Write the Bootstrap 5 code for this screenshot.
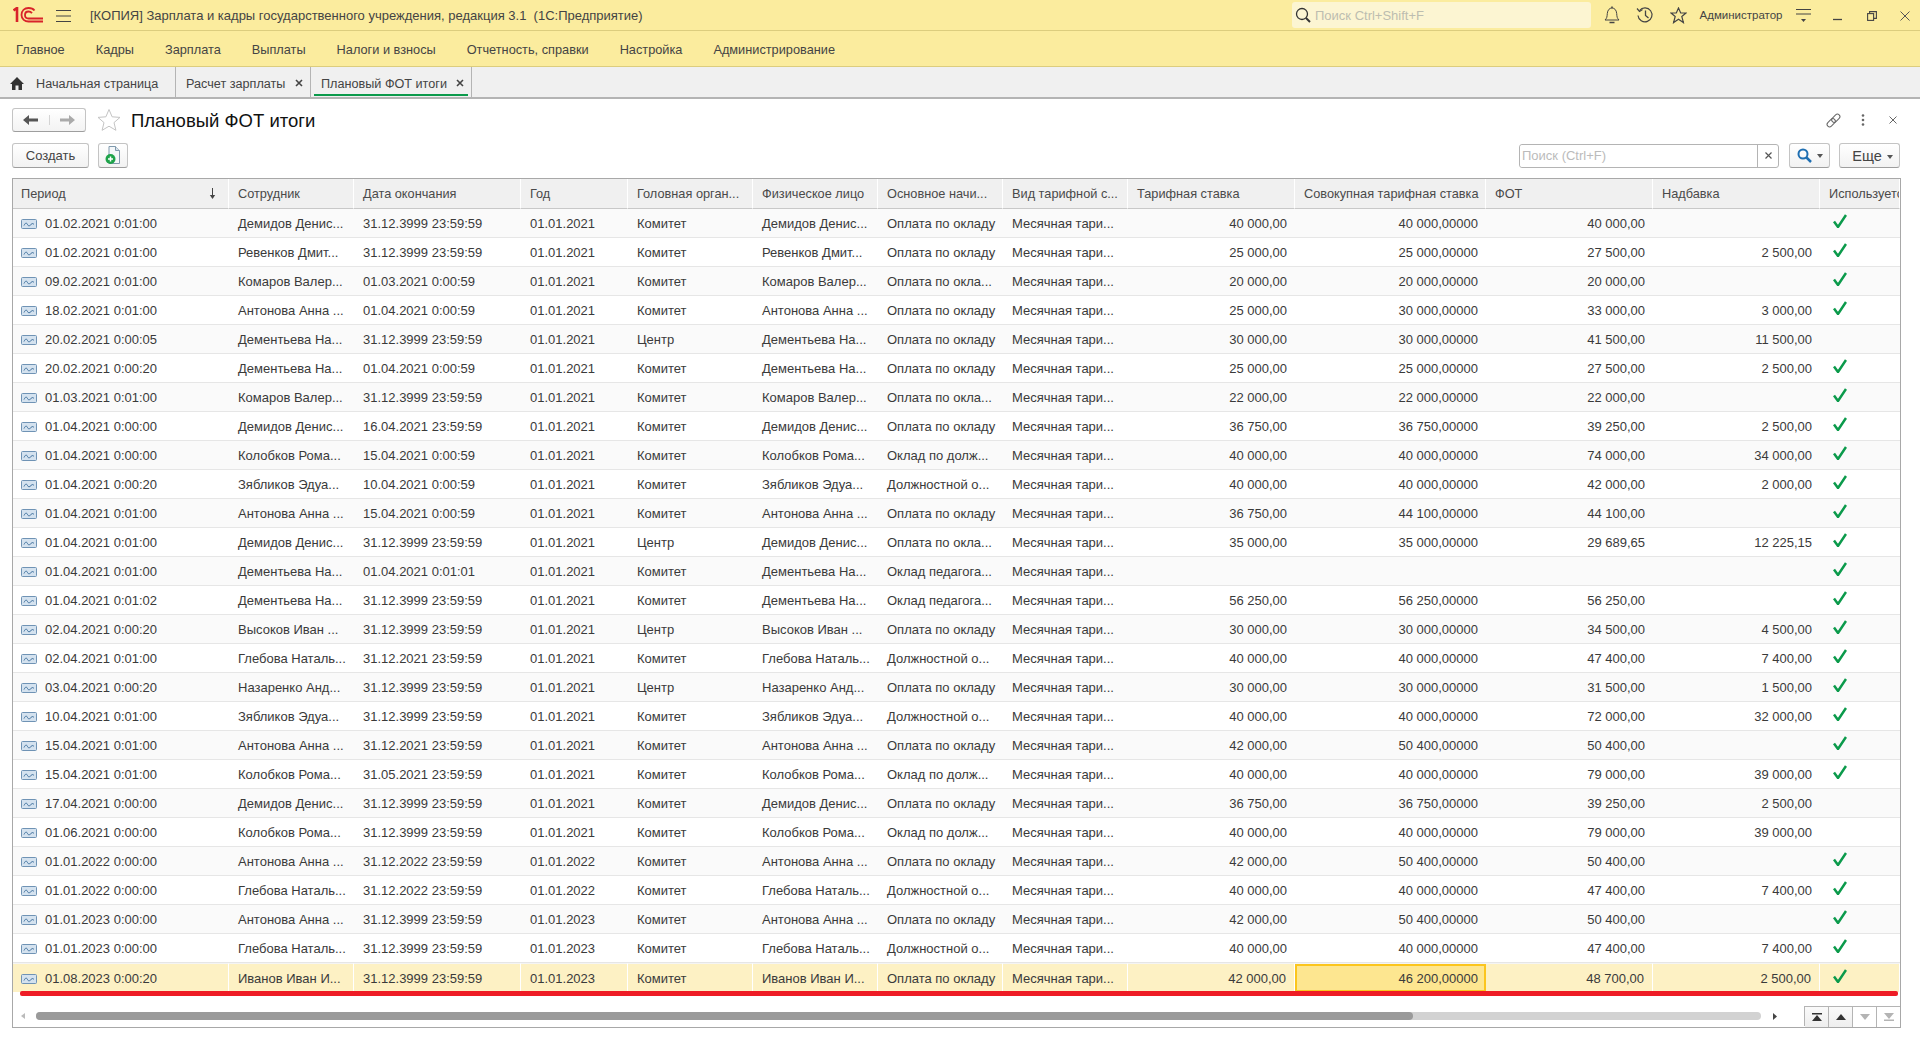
<!DOCTYPE html>
<html lang="ru">
<head>
<meta charset="utf-8">
<title>Плановый ФОТ итоги</title>
<link href="https://cdn.jsdelivr.net/npm/bootstrap@5.3.0/dist/css/bootstrap.min.css" rel="stylesheet">
<style>
html,body{height:100%;overflow:hidden}
body{font-family:"Liberation Sans",Arial,sans-serif;font-size:13px;color:#3a3a3a;background:#fff;line-height:16px}
.app-top{height:31px;background:#fbec9e;border-bottom:1px solid #dccd7e;overflow:hidden}
.app-top>*{flex-shrink:0}
.logo-box{width:56px;padding-left:13px}
.burger-box{width:34px}
.app-name{width:1202px;color:#444;white-space:pre;padding-top:1px}
.global-search{width:299px;height:26px;background:#fcf5d2;border-radius:3px;padding-left:3px;color:#bdbdb0}
.global-search svg{margin-right:4px}
.global-search span{padding-top:1px}
.top-icons{margin-left:4px}
.top-icons>*{flex-shrink:0}
.top-ico{width:33.5px;text-align:center}
.top-user{font-size:11.5px;width:91px;color:#444;white-space:nowrap}
.win-ico{width:34px;text-align:center}
.win-last{width:31px;text-align:left;padding-left:11px}
.app-menu{height:36px;background:#fbec9e;border-bottom:1px solid #dccd7e;padding-left:16px;gap:31px}
.app-menu .nav-link{padding:2px 0 0;color:#444;font-size:12.75px}
.app-tabs{height:32px;background:#f0f0f0;border-bottom:2px solid #b4b4b4}
.tab-item{height:30px;border-right:1px solid #b4b4b4;color:#444;position:relative;padding:3px 0 0 10px;font-size:12.65px}
.tab-home{width:176px}
.tab-calc{width:135px}
.tab-plan{width:161px}
.tab-line{position:absolute;left:3px;right:3px;bottom:1px;height:2px;background:#0b9a4b}
.tab-x{position:absolute;right:7px;top:12px;line-height:0}
.tab-label{margin-left:12px}
.form-head{padding:9px 12px 0 12px;height:33px}
.nav-pair{width:74px;height:24px;border:1px solid #c4c4c4;border-bottom-color:#9e9e9e;border-radius:3px;background:linear-gradient(#fff,#f3f3f3)}
.nav-half{flex:1;text-align:center;line-height:0}
.nav-half+.nav-half{border-left:1px solid #d4d4d4}
.star-wrap{margin:0 10px 0 11px;line-height:0}
.form-title{font-size:18.5px;line-height:24px;color:#111;padding-top:1px}
.tool-gap{width:30px;text-align:center;line-height:0}
.cmd-bar{margin-top:11px;padding:0 20px 0 12px;height:25px}
.btn.ui-btn{font-size:13px;line-height:16px;color:#444;height:25px;padding:0;border:1px solid #c4c4c4;border-bottom-color:#9e9e9e;border-radius:3px;background:linear-gradient(#fff,#f2f2f2)}
.btn-create{width:77px;margin-right:9px}
.btn-add{width:30px}
.find-box{width:260px;height:24px;border:1px solid #b4b4b4;border-radius:3px;margin-right:10px}
.find-box .form-control{font-size:13px;line-height:16px;border:0;height:22px;padding:0 2px;border-radius:3px 0 0 3px;flex:1;color:#444;box-shadow:none}
.find-box .form-control::placeholder{color:#bbb}
.find-clear{width:21px;border-left:1px solid #b4b4b4;line-height:0}
.btn-find{width:41px;margin-right:9px}
.btn.ui-btn.btn-more{width:61px;font-size:14.5px;padding-left:6px}
.caret-dn{display:inline-block;width:0;height:0;border:3px solid transparent;border-top:4px solid #555;border-bottom:0;margin-left:5px;vertical-align:2px}
.grid-frame{position:relative;margin:10px 0 0 12px;width:1889px;height:850px;border:1px solid #a8a8a8;overflow:hidden}
.grid-table{table-layout:fixed;width:1887px;border-collapse:separate;border-spacing:0;margin:0}
.grid-table col:nth-child(1){width:216px}
.grid-table col:nth-child(2),.grid-table col:nth-child(5),.grid-table col:nth-child(6),.grid-table col:nth-child(7),.grid-table col:nth-child(8){width:125px}
.grid-table col:nth-child(3),.grid-table col:nth-child(9),.grid-table col:nth-child(11),.grid-table col:nth-child(12){width:167px}
.grid-table col:nth-child(4){width:107px}
.grid-table col:nth-child(10){width:191px}
.grid-table col:nth-child(13){width:80px}
.grid-table>thead>tr>th{height:30px;padding:0 8px;background:#f0f0f0;font-weight:400;font-size:12.75px;color:#4a4a4a;border-bottom:1px solid #c8c8c8;border-right:1px solid #fff;white-space:nowrap;overflow:hidden;position:relative;vertical-align:middle;box-shadow:none}
.grid-table>tbody>tr>td{height:29px;padding:1px 8px 0 9px;background:#fff;color:#3a3a3a;border-bottom:1px solid #e6e6e6;white-space:nowrap;overflow:hidden;vertical-align:middle;box-shadow:none;line-height:16px}
.grid-table>tbody>tr:nth-child(odd)>td{background:#fafafa}
.grid-table>tbody>tr>td.cell-num{text-align:right}
.grid-table>tbody>tr>td.cell-first{padding-left:8px}
.grid-table>tbody>tr>td.cell-chk{padding:0 0 4px 13px;line-height:0}
.grid-table>thead>tr>th+th{padding-left:9px}
.doc-ico{margin-right:8px;vertical-align:-1px}
.sort-ico{position:absolute;right:12px;top:9px}
.grid-table>tbody>tr.row-sel>td{background:#fdf1c4;border-bottom:0;border-right:1px solid #fff;border-top:1px solid #f4f4f4}
.grid-table>tbody>tr.row-sel>td.cell-cur{background:#fde690;box-shadow:inset 0 0 0 2px #fbc51d;border-right:0}
.mark-line{position:absolute;left:7px;top:812px;width:1878px;height:5px;background:#ee1c25;border-radius:2px}
.grid-foot{height:34px;padding-left:8px}
.scroll-arrow{width:15px;line-height:0;margin-top:21px}
.scroll-track{width:1725px;height:8px;background:#d2d2d2;border-radius:4px;margin-top:20px}
.scroll-thumb{height:8px;background:#9a9a9a;border-radius:4px}
.scroll-end{padding-left:12px;margin-top:21px;line-height:0}
.pager{margin-top:14px;width:96px;height:20px;border-left:1px solid #b4b4b4;border-top:1px solid #b4b4b4}
.pager-btn{flex:1;height:20px;line-height:0;border-right:1px solid #b4b4b4;background:linear-gradient(#fafafa,#eeeeee)}
.pager-btn:last-child{border-right:0}
.pager-btn.pager-off{background:#fff}
</style>
</head>
<body>
<svg width="0" height="0" class="position-absolute">
<defs>
<symbol id="doc" viewBox="0 0 16 10"><rect x=".5" y=".5" width="15" height="9" rx="1" fill="#d4e2ef" stroke="#6f93b5"/><path d="M3 6.500c1.500-3 2.500-3 3.500-1s2 1.500 3.500 0 2-1 3 0" fill="none" stroke="#3c6e9c"/></symbol>
<symbol id="chk" viewBox="0 0 14 14"><path d="M1 7.500 5 13 13 1" fill="none" stroke="#0b9a4b" stroke-width="2.500"/></symbol>
</defs>
</svg>

<div class="app-top d-flex align-items-center">
  <div class="logo-box d-flex align-items-center">
    <svg width="30" height="16" viewBox="0 0 30 16" fill="none" stroke="#d8232a">
      <path d="M.5 3.500 4 1v14" stroke-width="2.600"/>
      <path d="M21.500 3.500C20 1.500 17.500 1 15.500 1 11.500 1 8.500 3.800 8.500 8s3.500 6.500 7 6.500H30" stroke-width="1.800"/>
      <path d="M19 6.200C18 5 17 4.500 15.500 4.500 13.500 4.500 12 6 12 8c0 2.300 1.800 3.500 3.500 3.500H30" stroke-width="1.800"/>
    </svg>
  </div>
  <div class="burger-box">
    <svg width="15" height="12" viewBox="0 0 15 12" stroke="#444"><path d="M0 .5h15M0 6h15M0 11.500h15"/></svg>
  </div>
  <div class="app-name">[КОПИЯ] Зарплата и кадры государственного учреждения, редакция 3.1  (1С:Предприятие)</div>
  <div class="global-search d-flex align-items-center">
    <svg width="16" height="16" viewBox="0 0 16 16" fill="none" stroke="#333" stroke-width="1.300"><circle cx="7" cy="7" r="5.500"/><path d="m11 11 4 4" stroke-width="2"/></svg>
    <span>Поиск Ctrl+Shift+F</span>
  </div>
  <div class="top-icons d-flex align-items-center">
    <div class="top-ico"><svg width="16" height="18" viewBox="0 0 16 18" fill="none" stroke="#444"><path d="M1 14c2-2 2-3 2.300-6.500C3.600 4 5.500 2 8 2s4.400 2 4.700 5.500C13 11 13 12 15 14z"/><path d="M8 .5V2M5.500 16.500h5" stroke-width="1.500"/></svg></div>
    <div class="top-ico"><svg width="18" height="18" viewBox="0 0 18 18" fill="none" stroke="#444"><path d="M3.500 4.500A7 7 0 1 1 2 9.500" stroke-width="1.200"/><path d="M1 2.500 3.500 5.500 6.500 3.500" stroke-width="1.200"/><path d="M9.500 4.500v5l3 2.500" stroke-width="1.300"/></svg></div>
    <div class="top-ico"><svg width="17" height="17" viewBox="0 0 17 17" fill="none" stroke="#444" stroke-width="1.200"><path d="m8.500 1 2.200 5h5.300l-4.200 3.500 1.600 6-4.900-3.300-4.900 3.300 1.600-6L1 6h5.300z"/></svg></div>
    <div class="top-user ps-1">Администратор</div>
    <div class="win-ico"><svg width="15" height="15" viewBox="0 0 15 15" stroke="#444"><path d="M0 1.500h15M0 6h15"/><path d="M5 11h5l-2.500 3z" fill="#444" stroke="none"/></svg></div>
    <div class="win-ico"><svg width="9" height="12" viewBox="0 0 9 12" stroke="#444" stroke-width="1.300"><path d="M0 9.500h9"/></svg></div>
    <div class="win-ico"><svg width="10" height="10" viewBox="0 0 10 10" fill="none" stroke="#444" stroke-width="1.100"><rect x=".6" y="2.600" width="6" height="6.800"/><path d="M2.600 2.500V.6h6.800v6.800H6.600"/></svg></div>
    <div class="win-ico win-last"><svg width="10" height="10" viewBox="0 0 10 10" stroke="#555"><path d="m.5.500 9 9m0-9-9 9"/></svg></div>
  </div>
</div>

<nav class="app-menu nav d-flex align-items-center flex-nowrap">
  <a class="nav-link" href="#">Главное</a>
  <a class="nav-link" href="#">Кадры</a>
  <a class="nav-link" href="#">Зарплата</a>
  <a class="nav-link" href="#">Выплаты</a>
  <a class="nav-link" href="#">Налоги и взносы</a>
  <a class="nav-link" href="#">Отчетность, справки</a>
  <a class="nav-link" href="#">Настройка</a>
  <a class="nav-link" href="#">Администрирование</a>
</nav>

<div class="app-tabs d-flex">
  <div class="tab-item tab-home d-flex align-items-center">
    <svg width="14" height="13" viewBox="0 0 14 13" fill="#333"><path d="M7 0 0 7h2v6h3.500V8.500h3V13H12V7h2z"/></svg>
    <span class="tab-label">Начальная страница</span>
  </div>
  <div class="tab-item tab-calc d-flex align-items-center">
    <span>Расчет зарплаты</span>
    <span class="tab-x"><svg width="8" height="8" viewBox="0 0 8 8" stroke="#444" stroke-width="1.600"><path d="m1 1 6 6m0-6-6 6"/></svg></span>
  </div>
  <div class="tab-item tab-plan d-flex align-items-center">
    <span>Плановый ФОТ итоги</span>
    <span class="tab-x"><svg width="8" height="8" viewBox="0 0 8 8" stroke="#444" stroke-width="1.600"><path d="m1 1 6 6m0-6-6 6"/></svg></span>
    <span class="tab-line"></span>
  </div>
</div>

<div class="form-head d-flex align-items-center">
  <div class="nav-pair d-flex align-items-center">
    <div class="nav-half"><svg width="15" height="10" viewBox="0 0 15 10" fill="#555"><path d="M0 5 6 0v3.500h9v3H6V10z"/></svg></div>
    <div class="nav-half"><svg width="15" height="10" viewBox="0 0 15 10" fill="#aaa"><path d="M15 5 9 0v3.500H0v3h9V10z"/></svg></div>
  </div>
  <div class="star-wrap"><svg width="24" height="24" viewBox="0 0 24 24" fill="none" stroke="#c4c4c4"><path d="m12 1.500 3.100 7.300 7.900.6-6 5.200 1.900 7.700L12 18.200l-6.900 4.100L7 14.600 1 9.400l7.900-.6z"/></svg></div>
  <div class="form-title">Плановый ФОТ итоги</div>
  <div class="d-flex align-items-center ms-auto">
    <div class="tool-gap"><svg width="17" height="17" viewBox="0 0 17 17" fill="none" stroke="#666"><g transform="rotate(-45 8.500 8.500)"><rect x=".5" y="6" width="9.500" height="5" rx="2.500"/><rect x="7" y="6" width="9.500" height="5" rx="2.500"/></g></svg></div>
    <div class="tool-gap"><svg width="4" height="12" viewBox="0 0 4 12" fill="#666"><circle cx="2" cy="1.500" r="1.300"/><circle cx="2" cy="6" r="1.300"/><circle cx="2" cy="10.500" r="1.300"/></svg></div>
    <div class="tool-gap"><svg width="8" height="8" viewBox="0 0 8 8" stroke="#666"><path d="m.5.500 7 7m0-7-7 7"/></svg></div>
  </div>
</div>

<div class="cmd-bar d-flex align-items-center">
  <button type="button" class="btn ui-btn btn-create">Создать</button>
  <button type="button" class="btn ui-btn btn-add d-flex align-items-center justify-content-center">
    <svg width="16" height="19" viewBox="0 0 16 19"><path d="M4 .5h6.500l4 4v13H4z" fill="#f4f7f9" stroke="#7f99ad"/><path d="M10.500.5v4h4" fill="#d8e2ea" stroke="#7f99ad"/><circle cx="5.500" cy="13" r="5" fill="#1ea34a"/><path d="M5.500 10.500v5M3 13h5" stroke="#fff" stroke-width="1.500"/></svg>
  </button>
  <div class="find-box d-flex align-items-center ms-auto">
    <input class="form-control" type="text" placeholder="Поиск (Ctrl+F)" aria-label="Поиск">
    <div class="find-clear d-flex h-100 align-items-center justify-content-center"><svg width="7" height="7" viewBox="0 0 7 7" stroke="#555" stroke-width="1.200"><path d="m.5.500 6 6m0-6-6 6"/></svg></div>
  </div>
  <button type="button" class="btn ui-btn btn-find d-flex align-items-center justify-content-center">
    <svg width="15" height="15" viewBox="0 0 15 15" fill="none" stroke="#1f6fb2" stroke-width="2"><circle cx="6" cy="6" r="4.500"/><path d="m9.500 9.500 4.500 4.500" stroke-width="2.500"/></svg><span class="caret-dn"></span>
  </button>
  <button type="button" class="btn ui-btn btn-more">Еще<span class="caret-dn"></span></button>
</div>

<div class="grid-frame">
<table class="table grid-table">
<colgroup><col><col><col><col><col><col><col><col><col><col><col><col><col></colgroup>
<thead><tr><th>Период<svg class="sort-ico" width="7" height="11" viewBox="0 0 7 11"><path d="M3.500 0v8" stroke="#444"/><path d="M.8 7h5.400L3.500 11z" fill="#444"/></svg></th><th>Сотрудник</th><th>Дата окончания</th><th>Год</th><th>Головная орган...</th><th>Физическое лицо</th><th>Основное начи...</th><th>Вид тарифной с...</th><th>Тарифная ставка</th><th>Совокупная тарифная ставка</th><th>ФОТ</th><th>Надбавка</th><th>Используется</th></tr></thead>
<tbody>
<tr><td class="cell-first"><svg class="doc-ico" width="16" height="10"><use href="#doc"/></svg>01.02.2021 0:01:00</td><td>Демидов Денис...</td><td>31.12.3999 23:59:59</td><td>01.01.2021</td><td>Комитет</td><td>Демидов Денис...</td><td>Оплата по окладу</td><td>Месячная тари...</td><td class="cell-num">40 000,00</td><td class="cell-num">40 000,00000</td><td class="cell-num">40 000,00</td><td class="cell-num"></td><td class="cell-chk"><svg width="14" height="14"><use href="#chk"/></svg></td></tr>
<tr><td class="cell-first"><svg class="doc-ico" width="16" height="10"><use href="#doc"/></svg>01.02.2021 0:01:00</td><td>Ревенков Дмит...</td><td>31.12.3999 23:59:59</td><td>01.01.2021</td><td>Комитет</td><td>Ревенков Дмит...</td><td>Оплата по окладу</td><td>Месячная тари...</td><td class="cell-num">25 000,00</td><td class="cell-num">25 000,00000</td><td class="cell-num">27 500,00</td><td class="cell-num">2 500,00</td><td class="cell-chk"><svg width="14" height="14"><use href="#chk"/></svg></td></tr>
<tr><td class="cell-first"><svg class="doc-ico" width="16" height="10"><use href="#doc"/></svg>09.02.2021 0:01:00</td><td>Комаров Валер...</td><td>01.03.2021 0:00:59</td><td>01.01.2021</td><td>Комитет</td><td>Комаров Валер...</td><td>Оплата по окла...</td><td>Месячная тари...</td><td class="cell-num">20 000,00</td><td class="cell-num">20 000,00000</td><td class="cell-num">20 000,00</td><td class="cell-num"></td><td class="cell-chk"><svg width="14" height="14"><use href="#chk"/></svg></td></tr>
<tr><td class="cell-first"><svg class="doc-ico" width="16" height="10"><use href="#doc"/></svg>18.02.2021 0:01:00</td><td>Антонова Анна ...</td><td>01.04.2021 0:00:59</td><td>01.01.2021</td><td>Комитет</td><td>Антонова Анна ...</td><td>Оплата по окладу</td><td>Месячная тари...</td><td class="cell-num">25 000,00</td><td class="cell-num">30 000,00000</td><td class="cell-num">33 000,00</td><td class="cell-num">3 000,00</td><td class="cell-chk"><svg width="14" height="14"><use href="#chk"/></svg></td></tr>
<tr><td class="cell-first"><svg class="doc-ico" width="16" height="10"><use href="#doc"/></svg>20.02.2021 0:00:05</td><td>Дементьева На...</td><td>31.12.3999 23:59:59</td><td>01.01.2021</td><td>Центр</td><td>Дементьева На...</td><td>Оплата по окладу</td><td>Месячная тари...</td><td class="cell-num">30 000,00</td><td class="cell-num">30 000,00000</td><td class="cell-num">41 500,00</td><td class="cell-num">11 500,00</td><td class="cell-chk"></td></tr>
<tr><td class="cell-first"><svg class="doc-ico" width="16" height="10"><use href="#doc"/></svg>20.02.2021 0:00:20</td><td>Дементьева На...</td><td>01.04.2021 0:00:59</td><td>01.01.2021</td><td>Комитет</td><td>Дементьева На...</td><td>Оплата по окладу</td><td>Месячная тари...</td><td class="cell-num">25 000,00</td><td class="cell-num">25 000,00000</td><td class="cell-num">27 500,00</td><td class="cell-num">2 500,00</td><td class="cell-chk"><svg width="14" height="14"><use href="#chk"/></svg></td></tr>
<tr><td class="cell-first"><svg class="doc-ico" width="16" height="10"><use href="#doc"/></svg>01.03.2021 0:01:00</td><td>Комаров Валер...</td><td>31.12.3999 23:59:59</td><td>01.01.2021</td><td>Комитет</td><td>Комаров Валер...</td><td>Оплата по окла...</td><td>Месячная тари...</td><td class="cell-num">22 000,00</td><td class="cell-num">22 000,00000</td><td class="cell-num">22 000,00</td><td class="cell-num"></td><td class="cell-chk"><svg width="14" height="14"><use href="#chk"/></svg></td></tr>
<tr><td class="cell-first"><svg class="doc-ico" width="16" height="10"><use href="#doc"/></svg>01.04.2021 0:00:00</td><td>Демидов Денис...</td><td>16.04.2021 23:59:59</td><td>01.01.2021</td><td>Комитет</td><td>Демидов Денис...</td><td>Оплата по окладу</td><td>Месячная тари...</td><td class="cell-num">36 750,00</td><td class="cell-num">36 750,00000</td><td class="cell-num">39 250,00</td><td class="cell-num">2 500,00</td><td class="cell-chk"><svg width="14" height="14"><use href="#chk"/></svg></td></tr>
<tr><td class="cell-first"><svg class="doc-ico" width="16" height="10"><use href="#doc"/></svg>01.04.2021 0:00:00</td><td>Колобков Рома...</td><td>15.04.2021 0:00:59</td><td>01.01.2021</td><td>Комитет</td><td>Колобков Рома...</td><td>Оклад по долж...</td><td>Месячная тари...</td><td class="cell-num">40 000,00</td><td class="cell-num">40 000,00000</td><td class="cell-num">74 000,00</td><td class="cell-num">34 000,00</td><td class="cell-chk"><svg width="14" height="14"><use href="#chk"/></svg></td></tr>
<tr><td class="cell-first"><svg class="doc-ico" width="16" height="10"><use href="#doc"/></svg>01.04.2021 0:00:20</td><td>Зябликов Эдуа...</td><td>10.04.2021 0:00:59</td><td>01.01.2021</td><td>Комитет</td><td>Зябликов Эдуа...</td><td>Должностной о...</td><td>Месячная тари...</td><td class="cell-num">40 000,00</td><td class="cell-num">40 000,00000</td><td class="cell-num">42 000,00</td><td class="cell-num">2 000,00</td><td class="cell-chk"><svg width="14" height="14"><use href="#chk"/></svg></td></tr>
<tr><td class="cell-first"><svg class="doc-ico" width="16" height="10"><use href="#doc"/></svg>01.04.2021 0:01:00</td><td>Антонова Анна ...</td><td>15.04.2021 0:00:59</td><td>01.01.2021</td><td>Комитет</td><td>Антонова Анна ...</td><td>Оплата по окладу</td><td>Месячная тари...</td><td class="cell-num">36 750,00</td><td class="cell-num">44 100,00000</td><td class="cell-num">44 100,00</td><td class="cell-num"></td><td class="cell-chk"><svg width="14" height="14"><use href="#chk"/></svg></td></tr>
<tr><td class="cell-first"><svg class="doc-ico" width="16" height="10"><use href="#doc"/></svg>01.04.2021 0:01:00</td><td>Демидов Денис...</td><td>31.12.3999 23:59:59</td><td>01.01.2021</td><td>Центр</td><td>Демидов Денис...</td><td>Оплата по окла...</td><td>Месячная тари...</td><td class="cell-num">35 000,00</td><td class="cell-num">35 000,00000</td><td class="cell-num">29 689,65</td><td class="cell-num">12 225,15</td><td class="cell-chk"><svg width="14" height="14"><use href="#chk"/></svg></td></tr>
<tr><td class="cell-first"><svg class="doc-ico" width="16" height="10"><use href="#doc"/></svg>01.04.2021 0:01:00</td><td>Дементьева На...</td><td>01.04.2021 0:01:01</td><td>01.01.2021</td><td>Комитет</td><td>Дементьева На...</td><td>Оклад педагога...</td><td>Месячная тари...</td><td class="cell-num"></td><td class="cell-num"></td><td class="cell-num"></td><td class="cell-num"></td><td class="cell-chk"><svg width="14" height="14"><use href="#chk"/></svg></td></tr>
<tr><td class="cell-first"><svg class="doc-ico" width="16" height="10"><use href="#doc"/></svg>01.04.2021 0:01:02</td><td>Дементьева На...</td><td>31.12.3999 23:59:59</td><td>01.01.2021</td><td>Комитет</td><td>Дементьева На...</td><td>Оклад педагога...</td><td>Месячная тари...</td><td class="cell-num">56 250,00</td><td class="cell-num">56 250,00000</td><td class="cell-num">56 250,00</td><td class="cell-num"></td><td class="cell-chk"><svg width="14" height="14"><use href="#chk"/></svg></td></tr>
<tr><td class="cell-first"><svg class="doc-ico" width="16" height="10"><use href="#doc"/></svg>02.04.2021 0:00:20</td><td>Высоков Иван ...</td><td>31.12.3999 23:59:59</td><td>01.01.2021</td><td>Центр</td><td>Высоков Иван ...</td><td>Оплата по окладу</td><td>Месячная тари...</td><td class="cell-num">30 000,00</td><td class="cell-num">30 000,00000</td><td class="cell-num">34 500,00</td><td class="cell-num">4 500,00</td><td class="cell-chk"><svg width="14" height="14"><use href="#chk"/></svg></td></tr>
<tr><td class="cell-first"><svg class="doc-ico" width="16" height="10"><use href="#doc"/></svg>02.04.2021 0:01:00</td><td>Глебова Наталь...</td><td>31.12.2021 23:59:59</td><td>01.01.2021</td><td>Комитет</td><td>Глебова Наталь...</td><td>Должностной о...</td><td>Месячная тари...</td><td class="cell-num">40 000,00</td><td class="cell-num">40 000,00000</td><td class="cell-num">47 400,00</td><td class="cell-num">7 400,00</td><td class="cell-chk"><svg width="14" height="14"><use href="#chk"/></svg></td></tr>
<tr><td class="cell-first"><svg class="doc-ico" width="16" height="10"><use href="#doc"/></svg>03.04.2021 0:00:20</td><td>Назаренко Анд...</td><td>31.12.3999 23:59:59</td><td>01.01.2021</td><td>Центр</td><td>Назаренко Анд...</td><td>Оплата по окладу</td><td>Месячная тари...</td><td class="cell-num">30 000,00</td><td class="cell-num">30 000,00000</td><td class="cell-num">31 500,00</td><td class="cell-num">1 500,00</td><td class="cell-chk"><svg width="14" height="14"><use href="#chk"/></svg></td></tr>
<tr><td class="cell-first"><svg class="doc-ico" width="16" height="10"><use href="#doc"/></svg>10.04.2021 0:01:00</td><td>Зябликов Эдуа...</td><td>31.12.3999 23:59:59</td><td>01.01.2021</td><td>Комитет</td><td>Зябликов Эдуа...</td><td>Должностной о...</td><td>Месячная тари...</td><td class="cell-num">40 000,00</td><td class="cell-num">40 000,00000</td><td class="cell-num">72 000,00</td><td class="cell-num">32 000,00</td><td class="cell-chk"><svg width="14" height="14"><use href="#chk"/></svg></td></tr>
<tr><td class="cell-first"><svg class="doc-ico" width="16" height="10"><use href="#doc"/></svg>15.04.2021 0:01:00</td><td>Антонова Анна ...</td><td>31.12.2021 23:59:59</td><td>01.01.2021</td><td>Комитет</td><td>Антонова Анна ...</td><td>Оплата по окладу</td><td>Месячная тари...</td><td class="cell-num">42 000,00</td><td class="cell-num">50 400,00000</td><td class="cell-num">50 400,00</td><td class="cell-num"></td><td class="cell-chk"><svg width="14" height="14"><use href="#chk"/></svg></td></tr>
<tr><td class="cell-first"><svg class="doc-ico" width="16" height="10"><use href="#doc"/></svg>15.04.2021 0:01:00</td><td>Колобков Рома...</td><td>31.05.2021 23:59:59</td><td>01.01.2021</td><td>Комитет</td><td>Колобков Рома...</td><td>Оклад по долж...</td><td>Месячная тари...</td><td class="cell-num">40 000,00</td><td class="cell-num">40 000,00000</td><td class="cell-num">79 000,00</td><td class="cell-num">39 000,00</td><td class="cell-chk"><svg width="14" height="14"><use href="#chk"/></svg></td></tr>
<tr><td class="cell-first"><svg class="doc-ico" width="16" height="10"><use href="#doc"/></svg>17.04.2021 0:00:00</td><td>Демидов Денис...</td><td>31.12.3999 23:59:59</td><td>01.01.2021</td><td>Комитет</td><td>Демидов Денис...</td><td>Оплата по окладу</td><td>Месячная тари...</td><td class="cell-num">36 750,00</td><td class="cell-num">36 750,00000</td><td class="cell-num">39 250,00</td><td class="cell-num">2 500,00</td><td class="cell-chk"></td></tr>
<tr><td class="cell-first"><svg class="doc-ico" width="16" height="10"><use href="#doc"/></svg>01.06.2021 0:00:00</td><td>Колобков Рома...</td><td>31.12.3999 23:59:59</td><td>01.01.2021</td><td>Комитет</td><td>Колобков Рома...</td><td>Оклад по долж...</td><td>Месячная тари...</td><td class="cell-num">40 000,00</td><td class="cell-num">40 000,00000</td><td class="cell-num">79 000,00</td><td class="cell-num">39 000,00</td><td class="cell-chk"></td></tr>
<tr><td class="cell-first"><svg class="doc-ico" width="16" height="10"><use href="#doc"/></svg>01.01.2022 0:00:00</td><td>Антонова Анна ...</td><td>31.12.2022 23:59:59</td><td>01.01.2022</td><td>Комитет</td><td>Антонова Анна ...</td><td>Оплата по окладу</td><td>Месячная тари...</td><td class="cell-num">42 000,00</td><td class="cell-num">50 400,00000</td><td class="cell-num">50 400,00</td><td class="cell-num"></td><td class="cell-chk"><svg width="14" height="14"><use href="#chk"/></svg></td></tr>
<tr><td class="cell-first"><svg class="doc-ico" width="16" height="10"><use href="#doc"/></svg>01.01.2022 0:00:00</td><td>Глебова Наталь...</td><td>31.12.2022 23:59:59</td><td>01.01.2022</td><td>Комитет</td><td>Глебова Наталь...</td><td>Должностной о...</td><td>Месячная тари...</td><td class="cell-num">40 000,00</td><td class="cell-num">40 000,00000</td><td class="cell-num">47 400,00</td><td class="cell-num">7 400,00</td><td class="cell-chk"><svg width="14" height="14"><use href="#chk"/></svg></td></tr>
<tr><td class="cell-first"><svg class="doc-ico" width="16" height="10"><use href="#doc"/></svg>01.01.2023 0:00:00</td><td>Антонова Анна ...</td><td>31.12.3999 23:59:59</td><td>01.01.2023</td><td>Комитет</td><td>Антонова Анна ...</td><td>Оплата по окладу</td><td>Месячная тари...</td><td class="cell-num">42 000,00</td><td class="cell-num">50 400,00000</td><td class="cell-num">50 400,00</td><td class="cell-num"></td><td class="cell-chk"><svg width="14" height="14"><use href="#chk"/></svg></td></tr>
<tr><td class="cell-first"><svg class="doc-ico" width="16" height="10"><use href="#doc"/></svg>01.01.2023 0:00:00</td><td>Глебова Наталь...</td><td>31.12.3999 23:59:59</td><td>01.01.2023</td><td>Комитет</td><td>Глебова Наталь...</td><td>Должностной о...</td><td>Месячная тари...</td><td class="cell-num">40 000,00</td><td class="cell-num">40 000,00000</td><td class="cell-num">47 400,00</td><td class="cell-num">7 400,00</td><td class="cell-chk"><svg width="14" height="14"><use href="#chk"/></svg></td></tr>
<tr class="row-sel"><td class="cell-first"><svg class="doc-ico" width="16" height="10"><use href="#doc"/></svg>01.08.2023 0:00:20</td><td>Иванов Иван И...</td><td>31.12.3999 23:59:59</td><td>01.01.2023</td><td>Комитет</td><td>Иванов Иван И...</td><td>Оплата по окладу</td><td>Месячная тари...</td><td class="cell-num">42 000,00</td><td class="cell-num cell-cur">46 200,00000</td><td class="cell-num">48 700,00</td><td class="cell-num">2 500,00</td><td class="cell-chk"><svg width="14" height="14"><use href="#chk"/></svg></td></tr>
</tbody>
</table>
<div class="mark-line"></div>
<div class="grid-foot d-flex align-items-start">
  <div class="scroll-arrow"><svg width="4" height="6" viewBox="0 0 4 6" fill="#bbb"><path d="M4 0v6L0 3z"/></svg></div>
  <div class="scroll-track"><div class="scroll-thumb" style="width:1377px"></div></div>
  <div class="scroll-end"><svg width="4" height="7" viewBox="0 0 4 7" fill="#444"><path d="M0 0v7l4-3.500z"/></svg></div>
  <div class="pager d-flex ms-auto">
    <div class="pager-btn d-flex align-items-center justify-content-center"><svg width="10" height="8" viewBox="0 0 10 8" fill="#333"><path d="M0 0h10v1.500H0zM5 2l5 6H0z"/></svg></div>
    <div class="pager-btn d-flex align-items-center justify-content-center"><svg width="10" height="6" viewBox="0 0 10 6" fill="#333"><path d="M5 0l5 6H0z"/></svg></div>
    <div class="pager-btn pager-off d-flex align-items-center justify-content-center"><svg width="10" height="6" viewBox="0 0 10 6" fill="#b4b4b4"><path d="M5 6l5-6H0z"/></svg></div>
    <div class="pager-btn pager-off d-flex align-items-center justify-content-center"><svg width="10" height="8" viewBox="0 0 10 8" fill="#b4b4b4"><path d="M0 8h10V6.500H0zM5 6l5-6H0z"/></svg></div>
  </div>
</div>
</div>
<script src="https://cdn.jsdelivr.net/npm/bootstrap@5.3.0/dist/js/bootstrap.bundle.min.js"></script>
</body>
</html>
